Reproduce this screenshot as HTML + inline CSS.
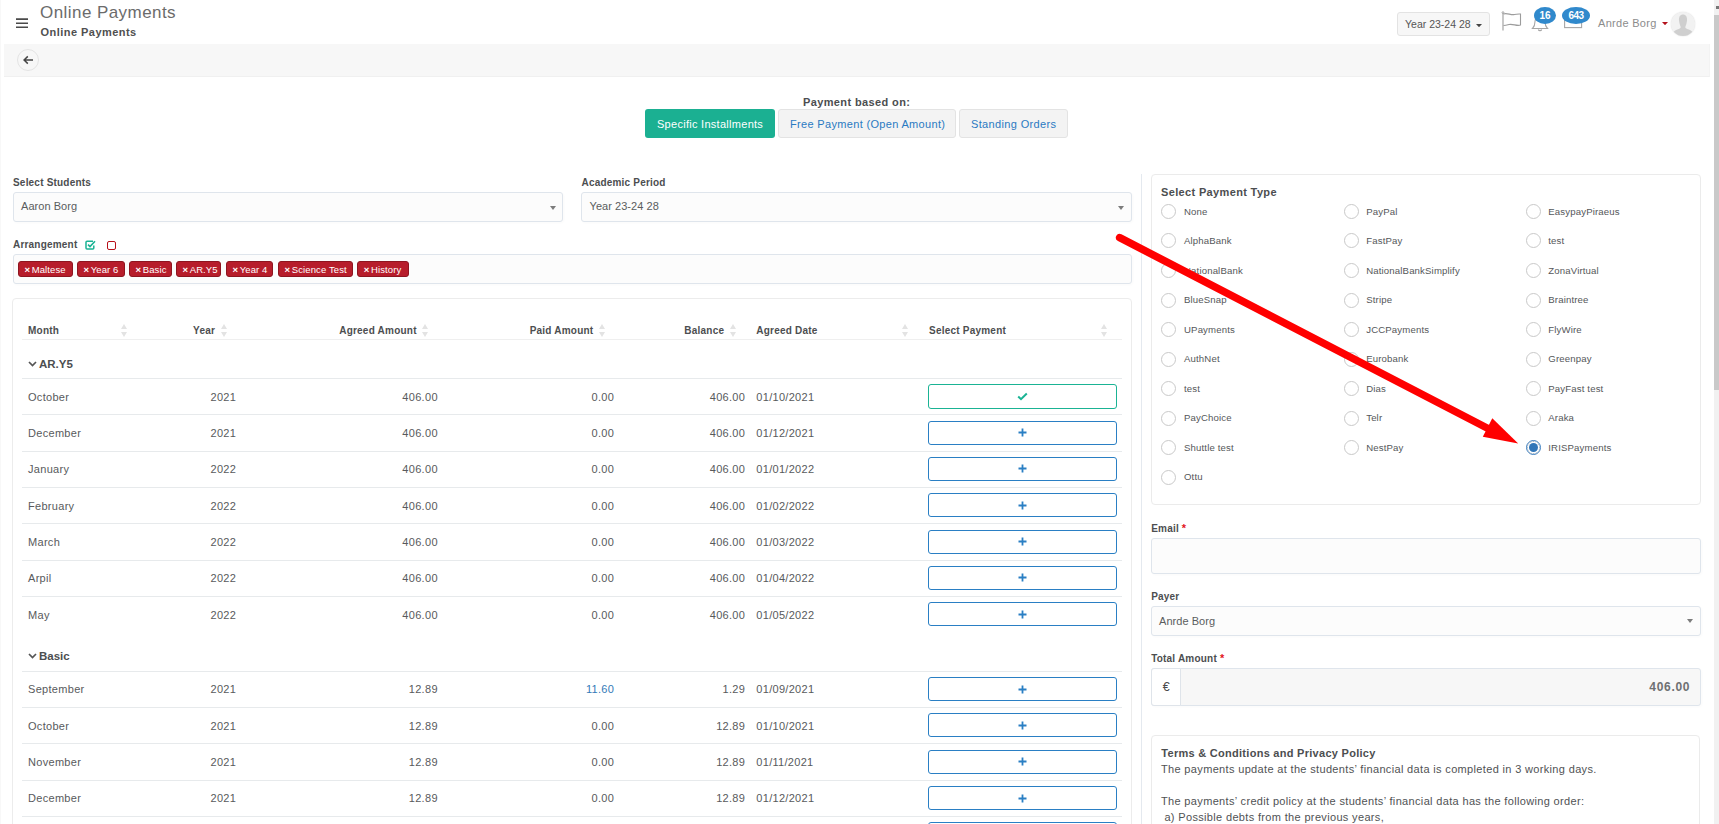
<!DOCTYPE html>
<html><head><meta charset="utf-8">
<style>
*{box-sizing:border-box;margin:0;padding:0}
html,body{width:1719px;height:824px;overflow:hidden;background:#fff}
body{position:relative;font-family:"Liberation Sans",sans-serif;color:#676a6c;font-size:11px}
.a{position:absolute;white-space:nowrap}
.b{font-weight:bold}
.lbl{position:absolute;white-space:nowrap;font-weight:bold;font-size:10px;color:#4c4e50;letter-spacing:0.2px;line-height:12px}
.inp{position:absolute;border:1px solid #dfe5ec;border-radius:3px;background:#fcfcfc;box-shadow:1px 1px 3px rgba(0,0,0,0.025)}
.caret{position:absolute;width:0;height:0;border-left:2.8px solid transparent;border-right:2.8px solid transparent;border-top:4px solid #7c7c7c}
.tag{position:absolute;top:261px;height:16px;background:#b71d2b;border:1px solid #8e1520;border-radius:3px;color:#fff;font-size:9.5px;line-height:15px;letter-spacing:0.12px;padding-left:5.5px}
.tag i{font-style:normal;font-weight:bold;font-size:9.5px;margin-right:1.5px;position:relative;top:0.3px}
.th{position:absolute;top:325px;font-weight:bold;font-size:10px;color:#4c4e50;letter-spacing:0.22px;line-height:12px;white-space:nowrap}
.srt{position:absolute;top:324px;width:6px;height:12px}
.srt:before{content:"";position:absolute;left:0;top:-0.5px;border-left:3.2px solid transparent;border-right:3.2px solid transparent;border-bottom:5.3px solid #e3e3e3}
.srt:after{content:"";position:absolute;left:0;top:7.8px;border-left:3.2px solid transparent;border-right:3.2px solid transparent;border-top:5.2px solid #e3e3e3}
.hl{position:absolute;left:22px;width:1100px;height:1px;background:#e7eaec}
.td{position:absolute;font-size:11px;letter-spacing:0.3px;color:#585a5c;line-height:14px;white-space:nowrap}
.r{text-align:right}
.btn{position:absolute;left:928px;width:189px;height:24px;border:1px solid #2a7fc4;border-radius:3px;background:#fff}
.rad{position:absolute;width:15px;height:15px;border:1px solid #c9c9c9;border-radius:50%;background:#fff}
.rl{position:absolute;font-size:9.6px;letter-spacing:0.15px;color:#55575a;line-height:12px;white-space:nowrap}
</style></head><body>
<div class="a" style="left:0;top:0;width:1px;height:824px;background:#f8f8f8"></div>
<svg class="a" style="left:0;top:0" width="40" height="40" viewBox="0 0 40 40"><path d="M16 19.1 H28 M16 23.2 H28 M16 27.3 H28" stroke="#4a4a4a" stroke-width="1.6" fill="none"/></svg>
<div class="a" style="left:40px;top:2.61px;font-size:17px;color:#6b6b6b;letter-spacing:0.44px;line-height:20px">Online Payments</div>
<div class="a b" style="left:40.5px;top:25.99px;font-size:11px;color:#505050;letter-spacing:0.46px;line-height:13px">Online Payments</div>
<div class="a" style="left:4px;top:44px;width:1706px;height:33px;background:#f7f7f7;border-bottom:1px solid #f0f0f0;border-right:1px solid #f3f3f3"></div>
<div class="a" style="left:17px;top:48.5px;width:22px;height:22px;border-radius:50%;border:1px solid #e4e4e4"></div>
<svg class="a" style="left:22px;top:54px" width="12" height="12" viewBox="0 0 12 12"><path d="M11 6 H2.3 M5.8 2.4 L2.1 6 L5.8 9.6" stroke="#454545" stroke-width="1.5" fill="none"/></svg>
<div class="a" style="left:1397px;top:12px;width:93px;height:24px;border:1px solid #e3e3e3;border-radius:3px;background:#f7f7f7"></div>
<div class="a" style="left:1405px;top:17.16px;font-size:10.5px;color:#555;line-height:14px">Year 23-24 28</div>
<svg class="a" style="left:1476px;top:23.8px" width="6" height="3.2" viewBox="0 0 6 3.2"><polygon points="0,0 6,0 3.0,3.2" fill="#444"/></svg>
<svg class="a" style="left:1500px;top:10px" width="24" height="24" viewBox="0 0 24 24">
 <path d="M3 2.5 V20.5" stroke="#9c9c9c" stroke-width="1.1" fill="none"/>
 <circle cx="3" cy="2.6" r="0.9" fill="#fff" stroke="#9c9c9c" stroke-width="0.9"/>
 <path d="M3.5 4 C7 2.5, 11 5.5, 14.5 4.5 C17 3.8, 19.5 4, 20.5 4 V15 C17 16.5, 13 13.5, 9 14.5 C6.5 15.2, 4.5 15.5, 3.5 15.5" stroke="#9c9c9c" stroke-width="1.1" fill="none"/>
</svg>
<svg class="a" style="left:1530px;top:13px" width="20" height="20" viewBox="0 0 20 20">
 <path d="M2.5 15.5 C4.5 13.5, 5 11, 5 8.5 C5 5.5, 7.5 3, 10 3 C12.5 3, 15 5.5, 15 8.5 C15 11, 15.5 13.5, 17.5 15.5 Z" stroke="#a6a6a6" stroke-width="1.1" fill="none"/>
 <path d="M8.3 16.5 C8.8 18, 11.2 18, 11.7 16.5" stroke="#a6a6a6" stroke-width="1.1" fill="none"/>
</svg>
<div class="a" style="left:1534px;top:7px;width:22px;height:17px;border-radius:50%;background:#3089cc;color:#fff;font-weight:bold;font-size:10px;line-height:17px;text-align:center">16</div>
<svg class="a" style="left:1562px;top:14px" width="22" height="16" viewBox="0 0 22 16">
 <rect x="2.6" y="2.6" width="17" height="11" stroke="#a6a6a6" stroke-width="1.1" fill="none"/>
</svg>
<div class="a" style="left:1562px;top:7px;width:28px;height:17px;border-radius:50%;background:#3089cc;color:#fff;font-weight:bold;font-size:10px;line-height:17px;text-align:center;letter-spacing:-0.6px">643</div>
<div class="a" style="left:1598px;top:15.69px;font-size:11px;color:#8c8c8c;letter-spacing:0.3px;line-height:14px">Anrde Borg</div>
<svg class="a" style="left:1662px;top:21.8px" width="6" height="3.2" viewBox="0 0 6 3.2"><polygon points="0,0 6,0 3.0,3.2" fill="#b4121c"/></svg>
<div class="a" style="left:1671px;top:11.5px;width:24px;height:24px;border-radius:50%;background:#f2f2f2;overflow:hidden;box-shadow:0 0 1.5px #d8d8d8">
 <svg width="24" height="24" viewBox="0 0 24 24"><path d="M12 2.6 C14.8 2.6, 16.3 4.8, 16 8.5 C15.8 11, 15 13.2, 14.3 15 C14.2 16, 15 16.6, 17.8 17.6 C20 18.4, 21.5 19.6, 22 22 L22 24 L2 24 L2 22 C2.5 19.6, 4 18.4, 6.2 17.6 C9 16.6, 9.8 16, 9.7 15 C9 13.2, 8.2 11, 8 8.5 C7.7 4.8, 9.2 2.6, 12 2.6 Z" fill="#cfcfcf"/></svg>
</div>
<div class="a b" style="left:803px;top:96.49px;font-size:11px;color:#4c4e50;letter-spacing:0.38px;line-height:13px">Payment based on:</div>
<div class="a" style="left:645px;top:109px;width:130px;height:29px;background:#1bb092;border-radius:3px"></div>
<div class="a" style="left:657px;top:116.99px;font-size:11px;color:#fff;letter-spacing:0.28px;line-height:14px">Specific Installments</div>
<div class="a" style="left:778px;top:109px;width:178px;height:29px;background:#f3f3f3;border:1px solid #e3e3e3;border-radius:3px"></div>
<div class="a" style="left:790px;top:116.99px;font-size:11px;color:#2a7ac2;letter-spacing:0.33px;line-height:14px">Free Payment (Open Amount)</div>
<div class="a" style="left:959px;top:109px;width:109px;height:29px;background:#f3f3f3;border:1px solid #e3e3e3;border-radius:3px"></div>
<div class="a" style="left:971px;top:116.99px;font-size:11px;color:#2a7ac2;letter-spacing:0.35px;line-height:14px">Standing Orders</div>
<div class="lbl" style="left:13px;top:177.03px">Select Students</div>
<div class="inp" style="left:12.5px;top:192px;width:550px;height:29.5px"></div>
<div class="td" style="left:21px;top:198.69px;letter-spacing:0.05px;color:#5a5c5e">Aaron Borg</div>
<svg class="a" style="left:550px;top:205.6px" width="6" height="4" viewBox="0 0 6 4"><polygon points="0,0 6,0 3.0,4" fill="#7c7c7c"/></svg>
<div class="lbl" style="left:581.5px;top:177.03px">Academic Period</div>
<div class="inp" style="left:581px;top:192px;width:550.5px;height:29.5px"></div>
<div class="td" style="left:589.5px;top:198.69px;letter-spacing:0.05px;color:#5a5c5e">Year 23-24 28</div>
<svg class="a" style="left:1118.2px;top:205.6px" width="6" height="4" viewBox="0 0 6 4"><polygon points="0,0 6,0 3.0,4" fill="#7c7c7c"/></svg>
<div class="lbl" style="left:13px;top:239.34px">Arrangement</div>
<svg class="a" style="left:85px;top:239.8px" width="11" height="10" viewBox="0 0 11 10">
<path d="M8 1.2 H2 Q1 1.2 1 2.2 V8 Q1 9 2 9 H7.8 Q8.8 9 8.8 8 V5.5" stroke="#1ab394" stroke-width="1.5" fill="none"/>
<path d="M3 4.6 L5 6.6 L10 1.3" stroke="#1ab394" stroke-width="1.6" fill="none"/></svg>
<div class="a" style="left:107px;top:241px;width:9px;height:9px;border:1.7px solid #b8101a;border-radius:2px"></div>
<div class="inp" style="left:12.5px;top:254px;width:1119px;height:29.5px"></div>
<div class="tag" style="left:18px;width:55.0px"><i>&#215;</i>Maltese</div>
<div class="tag" style="left:77px;width:48.0px"><i>&#215;</i>Year 6</div>
<div class="tag" style="left:129px;width:43.0px"><i>&#215;</i>Basic</div>
<div class="tag" style="left:176px;width:45.0px"><i>&#215;</i>AR.Y5</div>
<div class="tag" style="left:226px;width:47.0px"><i>&#215;</i>Year 4</div>
<div class="tag" style="left:278px;width:74.6px"><i>&#215;</i>Science Test</div>
<div class="tag" style="left:357.3px;width:51.7px"><i>&#215;</i>History</div>
<div class="a" style="left:12px;top:298px;width:1119.5px;height:600px;border:1px solid #ececec;border-radius:4px;background:#fff"></div>
<div class="th" style="left:28px">Month</div>
<div class="th r" style="right:1503.9px">Year</div>
<div class="th r" style="right:1302.3px">Agreed Amount</div>
<div class="th r" style="right:1125.6px">Paid Amount</div>
<div class="th r" style="right:994.8px">Balance</div>
<div class="th" style="left:756.3px">Agreed Date</div>
<div class="th" style="left:929px">Select Payment</div>
<div class="srt" style="left:120.8px"></div>
<div class="srt" style="left:220.6px"></div>
<div class="srt" style="left:421.8px"></div>
<div class="srt" style="left:598.9px"></div>
<div class="srt" style="left:729.8px"></div>
<div class="srt" style="left:901.8px"></div>
<div class="srt" style="left:1100.8px"></div>
<div class="hl" style="top:339px;background:#efefef"></div>
<svg class="a" style="left:27.5px;top:361.1px" width="9" height="6" viewBox="0 0 9 6"><path d="M1 1 L4.5 4.5 L8 1" stroke="#555" stroke-width="1.7" fill="none"/></svg>
<div class="td b" style="left:39px;top:357.42px;font-size:11.5px;letter-spacing:0;color:#4c4e50">AR.Y5</div>
<div class="hl" style="top:378px"></div>
<div class="td" style="left:28px;top:389.59px">October</div>
<div class="td r" style="right:1482.8px;top:389.59px">2021</div>
<div class="td r" style="right:1281.2px;top:389.59px">406.00</div>
<div class="td r" style="right:1104.8px;top:389.59px">0.00</div>
<div class="td r" style="right:973.8px;top:389.59px">406.00</div>
<div class="td" style="left:756.3px;top:389.59px">01/10/2021</div>
<div class="btn" style="top:384px;height:25px;border-color:#1ab394;"><svg class="a" style="left:88px;top:7px" width="11" height="9" viewBox="0 0 11 9"><path d="M1.2 4.5 L4 7.2 L9.8 1.5" stroke="#1ab394" stroke-width="2" fill="none"/></svg></div>
<div class="hl" style="top:414px"></div>
<div class="td" style="left:28px;top:425.92px">December</div>
<div class="td r" style="right:1482.8px;top:425.92px">2021</div>
<div class="td r" style="right:1281.2px;top:425.92px">406.00</div>
<div class="td r" style="right:1104.8px;top:425.92px">0.00</div>
<div class="td r" style="right:973.8px;top:425.92px">406.00</div>
<div class="td" style="left:756.3px;top:425.92px">01/12/2021</div>
<div class="btn" style="top:420.63px"><svg class="a" style="left:89px;top:6.5px" width="9" height="9" viewBox="0 0 9 9"><path d="M4.5 0.5 V8.5 M0.5 4.5 H8.5" stroke="#2a7fc4" stroke-width="1.8" fill="none"/></svg></div>
<div class="hl" style="top:451px"></div>
<div class="td" style="left:28px;top:462.25px">January</div>
<div class="td r" style="right:1482.8px;top:462.25px">2022</div>
<div class="td r" style="right:1281.2px;top:462.25px">406.00</div>
<div class="td r" style="right:1104.8px;top:462.25px">0.00</div>
<div class="td r" style="right:973.8px;top:462.25px">406.00</div>
<div class="td" style="left:756.3px;top:462.25px">01/01/2022</div>
<div class="btn" style="top:456.96px"><svg class="a" style="left:89px;top:6.5px" width="9" height="9" viewBox="0 0 9 9"><path d="M4.5 0.5 V8.5 M0.5 4.5 H8.5" stroke="#2a7fc4" stroke-width="1.8" fill="none"/></svg></div>
<div class="hl" style="top:487px"></div>
<div class="td" style="left:28px;top:498.58px">February</div>
<div class="td r" style="right:1482.8px;top:498.58px">2022</div>
<div class="td r" style="right:1281.2px;top:498.58px">406.00</div>
<div class="td r" style="right:1104.8px;top:498.58px">0.00</div>
<div class="td r" style="right:973.8px;top:498.58px">406.00</div>
<div class="td" style="left:756.3px;top:498.58px">01/02/2022</div>
<div class="btn" style="top:493.29px"><svg class="a" style="left:89px;top:6.5px" width="9" height="9" viewBox="0 0 9 9"><path d="M4.5 0.5 V8.5 M0.5 4.5 H8.5" stroke="#2a7fc4" stroke-width="1.8" fill="none"/></svg></div>
<div class="hl" style="top:523px"></div>
<div class="td" style="left:28px;top:534.91px">March</div>
<div class="td r" style="right:1482.8px;top:534.91px">2022</div>
<div class="td r" style="right:1281.2px;top:534.91px">406.00</div>
<div class="td r" style="right:1104.8px;top:534.91px">0.00</div>
<div class="td r" style="right:973.8px;top:534.91px">406.00</div>
<div class="td" style="left:756.3px;top:534.91px">01/03/2022</div>
<div class="btn" style="top:529.62px"><svg class="a" style="left:89px;top:6.5px" width="9" height="9" viewBox="0 0 9 9"><path d="M4.5 0.5 V8.5 M0.5 4.5 H8.5" stroke="#2a7fc4" stroke-width="1.8" fill="none"/></svg></div>
<div class="hl" style="top:560px"></div>
<div class="td" style="left:28px;top:571.24px">Arpil</div>
<div class="td r" style="right:1482.8px;top:571.24px">2022</div>
<div class="td r" style="right:1281.2px;top:571.24px">406.00</div>
<div class="td r" style="right:1104.8px;top:571.24px">0.00</div>
<div class="td r" style="right:973.8px;top:571.24px">406.00</div>
<div class="td" style="left:756.3px;top:571.24px">01/04/2022</div>
<div class="btn" style="top:565.95px"><svg class="a" style="left:89px;top:6.5px" width="9" height="9" viewBox="0 0 9 9"><path d="M4.5 0.5 V8.5 M0.5 4.5 H8.5" stroke="#2a7fc4" stroke-width="1.8" fill="none"/></svg></div>
<div class="hl" style="top:596px"></div>
<div class="td" style="left:28px;top:607.57px">May</div>
<div class="td r" style="right:1482.8px;top:607.57px">2022</div>
<div class="td r" style="right:1281.2px;top:607.57px">406.00</div>
<div class="td r" style="right:1104.8px;top:607.57px">0.00</div>
<div class="td r" style="right:973.8px;top:607.57px">406.00</div>
<div class="td" style="left:756.3px;top:607.57px">01/05/2022</div>
<div class="btn" style="top:602.28px"><svg class="a" style="left:89px;top:6.5px" width="9" height="9" viewBox="0 0 9 9"><path d="M4.5 0.5 V8.5 M0.5 4.5 H8.5" stroke="#2a7fc4" stroke-width="1.8" fill="none"/></svg></div>
<svg class="a" style="left:27.5px;top:653.1px" width="9" height="6" viewBox="0 0 9 6"><path d="M1 1 L4.5 4.5 L8 1" stroke="#555" stroke-width="1.7" fill="none"/></svg>
<div class="td b" style="left:39px;top:649.42px;font-size:11.5px;letter-spacing:0;color:#4c4e50">Basic</div>
<div class="hl" style="top:671px"></div>
<div class="td" style="left:28px;top:682.39px">September</div>
<div class="td r" style="right:1482.8px;top:682.39px">2021</div>
<div class="td r" style="right:1281.2px;top:682.39px">12.89</div>
<div class="td r" style="right:1104.8px;top:682.39px;color:#337ab7">11.60</div>
<div class="td r" style="right:973.8px;top:682.39px">1.29</div>
<div class="td" style="left:756.3px;top:682.39px">01/09/2021</div>
<div class="btn" style="top:677.10px"><svg class="a" style="left:89px;top:6.5px" width="9" height="9" viewBox="0 0 9 9"><path d="M4.5 0.5 V8.5 M0.5 4.5 H8.5" stroke="#2a7fc4" stroke-width="1.8" fill="none"/></svg></div>
<div class="hl" style="top:707px"></div>
<div class="td" style="left:28px;top:718.72px">October</div>
<div class="td r" style="right:1482.8px;top:718.72px">2021</div>
<div class="td r" style="right:1281.2px;top:718.72px">12.89</div>
<div class="td r" style="right:1104.8px;top:718.72px">0.00</div>
<div class="td r" style="right:973.8px;top:718.72px">12.89</div>
<div class="td" style="left:756.3px;top:718.72px">01/10/2021</div>
<div class="btn" style="top:713.43px"><svg class="a" style="left:89px;top:6.5px" width="9" height="9" viewBox="0 0 9 9"><path d="M4.5 0.5 V8.5 M0.5 4.5 H8.5" stroke="#2a7fc4" stroke-width="1.8" fill="none"/></svg></div>
<div class="hl" style="top:743px"></div>
<div class="td" style="left:28px;top:755.05px">November</div>
<div class="td r" style="right:1482.8px;top:755.05px">2021</div>
<div class="td r" style="right:1281.2px;top:755.05px">12.89</div>
<div class="td r" style="right:1104.8px;top:755.05px">0.00</div>
<div class="td r" style="right:973.8px;top:755.05px">12.89</div>
<div class="td" style="left:756.3px;top:755.05px">01/11/2021</div>
<div class="btn" style="top:749.76px"><svg class="a" style="left:89px;top:6.5px" width="9" height="9" viewBox="0 0 9 9"><path d="M4.5 0.5 V8.5 M0.5 4.5 H8.5" stroke="#2a7fc4" stroke-width="1.8" fill="none"/></svg></div>
<div class="hl" style="top:780px"></div>
<div class="td" style="left:28px;top:791.38px">December</div>
<div class="td r" style="right:1482.8px;top:791.38px">2021</div>
<div class="td r" style="right:1281.2px;top:791.38px">12.89</div>
<div class="td r" style="right:1104.8px;top:791.38px">0.00</div>
<div class="td r" style="right:973.8px;top:791.38px">12.89</div>
<div class="td" style="left:756.3px;top:791.38px">01/12/2021</div>
<div class="btn" style="top:786.09px"><svg class="a" style="left:89px;top:6.5px" width="9" height="9" viewBox="0 0 9 9"><path d="M4.5 0.5 V8.5 M0.5 4.5 H8.5" stroke="#2a7fc4" stroke-width="1.8" fill="none"/></svg></div>
<div class="hl" style="top:816px"></div>
<div class="td" style="left:28px;top:827.71px">January</div>
<div class="td r" style="right:1482.8px;top:827.71px">2022</div>
<div class="td r" style="right:1281.2px;top:827.71px">12.89</div>
<div class="td r" style="right:1104.8px;top:827.71px">0.00</div>
<div class="td r" style="right:973.8px;top:827.71px">12.89</div>
<div class="td" style="left:756.3px;top:827.71px">01/01/2022</div>
<div class="btn" style="top:822.42px"><svg class="a" style="left:89px;top:6.5px" width="9" height="9" viewBox="0 0 9 9"><path d="M4.5 0.5 V8.5 M0.5 4.5 H8.5" stroke="#2a7fc4" stroke-width="1.8" fill="none"/></svg></div>
<div class="a" style="left:1141px;top:174px;width:1px;height:650px;background:#e4e9ef"></div>
<div class="a" style="left:1151px;top:174px;width:549.5px;height:330.5px;border:1px solid #ebebeb;border-radius:4px;background:#fff"></div>
<div class="a b" style="left:1161px;top:186.29px;font-size:11px;color:#4c4e50;letter-spacing:0.35px;line-height:13px">Select Payment Type</div>
<div class="rad" style="left:1161.0px;top:203.9px"></div>
<div class="rl" style="left:1184px;top:205.77px">None</div>
<div class="rad" style="left:1161.0px;top:233.4px"></div>
<div class="rl" style="left:1184px;top:235.29px">AlphaBank</div>
<div class="rad" style="left:1161.0px;top:262.9px"></div>
<div class="rl" style="left:1184px;top:264.81px">NationalBank</div>
<div class="rad" style="left:1161.0px;top:292.5px"></div>
<div class="rl" style="left:1184px;top:294.33px">BlueSnap</div>
<div class="rad" style="left:1161.0px;top:322.0px"></div>
<div class="rl" style="left:1184px;top:323.85px">UPayments</div>
<div class="rad" style="left:1161.0px;top:351.5px"></div>
<div class="rl" style="left:1184px;top:353.37px">AuthNet</div>
<div class="rad" style="left:1161.0px;top:381.0px"></div>
<div class="rl" style="left:1184px;top:382.89px">test</div>
<div class="rad" style="left:1161.0px;top:410.5px"></div>
<div class="rl" style="left:1184px;top:412.41px">PayChoice</div>
<div class="rad" style="left:1161.0px;top:440.1px"></div>
<div class="rl" style="left:1184px;top:441.93px">Shuttle test</div>
<div class="rad" style="left:1161.0px;top:469.6px"></div>
<div class="rl" style="left:1184px;top:471.45px">Ottu</div>
<div class="rad" style="left:1343.7px;top:203.9px"></div>
<div class="rl" style="left:1366.2px;top:205.77px">PayPal</div>
<div class="rad" style="left:1343.7px;top:233.4px"></div>
<div class="rl" style="left:1366.2px;top:235.29px">FastPay</div>
<div class="rad" style="left:1343.7px;top:262.9px"></div>
<div class="rl" style="left:1366.2px;top:264.81px">NationalBankSimplify</div>
<div class="rad" style="left:1343.7px;top:292.5px"></div>
<div class="rl" style="left:1366.2px;top:294.33px">Stripe</div>
<div class="rad" style="left:1343.7px;top:322.0px"></div>
<div class="rl" style="left:1366.2px;top:323.85px">JCCPayments</div>
<div class="rad" style="left:1343.7px;top:351.5px"></div>
<div class="rl" style="left:1366.2px;top:353.37px">Eurobank</div>
<div class="rad" style="left:1343.7px;top:381.0px"></div>
<div class="rl" style="left:1366.2px;top:382.89px">Dias</div>
<div class="rad" style="left:1343.7px;top:410.5px"></div>
<div class="rl" style="left:1366.2px;top:412.41px">Telr</div>
<div class="rad" style="left:1343.7px;top:440.1px"></div>
<div class="rl" style="left:1366.2px;top:441.93px">NestPay</div>
<div class="rad" style="left:1526.1px;top:203.9px"></div>
<div class="rl" style="left:1548.3px;top:205.77px">EasypayPiraeus</div>
<div class="rad" style="left:1526.1px;top:233.4px"></div>
<div class="rl" style="left:1548.3px;top:235.29px">test</div>
<div class="rad" style="left:1526.1px;top:262.9px"></div>
<div class="rl" style="left:1548.3px;top:264.81px">ZonaVirtual</div>
<div class="rad" style="left:1526.1px;top:292.5px"></div>
<div class="rl" style="left:1548.3px;top:294.33px">Braintree</div>
<div class="rad" style="left:1526.1px;top:322.0px"></div>
<div class="rl" style="left:1548.3px;top:323.85px">FlyWire</div>
<div class="rad" style="left:1526.1px;top:351.5px"></div>
<div class="rl" style="left:1548.3px;top:353.37px">Greenpay</div>
<div class="rad" style="left:1526.1px;top:381.0px"></div>
<div class="rl" style="left:1548.3px;top:382.89px">PayFast test</div>
<div class="rad" style="left:1526.1px;top:410.5px"></div>
<div class="rl" style="left:1548.3px;top:412.41px">Araka</div>
<div class="rad" style="left:1526.1px;top:440.1px;border-color:#3a7ec0"></div>
<div class="a" style="left:1527.3px;top:441.3px;width:12.6px;height:12.6px;border-radius:50%;border:1px dotted #9ab"></div>
<div class="a" style="left:1528.9px;top:442.9px;width:9.4px;height:9.4px;border-radius:50%;background:#3176b8"></div>
<div class="rl" style="left:1548.3px;top:441.93px">IRISPayments</div>
<div class="lbl" style="left:1151.2px;top:521.63px">Email <span style="color:#e2141c;font-size:11px">*</span></div>
<div class="inp" style="left:1151px;top:537.5px;width:549.5px;height:36.5px"></div>
<div class="lbl" style="left:1151.2px;top:590.53px">Payer</div>
<div class="inp" style="left:1151px;top:605.8px;width:549.5px;height:30px"></div>
<div class="td" style="left:1159px;top:613.59px;letter-spacing:0.05px;color:#5a5c5e">Anrde Borg</div>
<svg class="a" style="left:1686.8px;top:619.4px" width="6" height="4" viewBox="0 0 6 4"><polygon points="0,0 6,0 3.0,4" fill="#7c7c7c"/></svg>
<div class="lbl" style="left:1151.2px;top:652.33px">Total Amount <span style="color:#e2141c;font-size:11px">*</span></div>
<div class="inp" style="left:1151px;top:668px;width:549.5px;height:37.5px;background:#f7f7f7"></div>
<div class="a" style="left:1151px;top:668px;width:30px;height:37.5px;border:1px solid #dfe4ea;border-radius:3px 0 0 3px;background:#fff"></div>
<div class="td" style="left:1162.8px;top:679.67px;color:#4a4a4a;font-size:12.5px;letter-spacing:0">&#8364;</div>
<div class="td b r" style="right:28.799999999999955px;top:679.94px;font-size:12px;color:#6e7072;letter-spacing:0.7px;padding-right:0">406.00</div>
<div class="a" style="left:1151px;top:735px;width:549px;height:200px;border:1px solid #ebebeb;border-radius:4px;background:#fff"></div>
<div class="a b" style="left:1161.3px;top:744.79px;font-size:11px;color:#4c4e50;letter-spacing:0.28px;line-height:16px">Terms &amp; Conditions and Privacy Policy</div>
<div class="a" style="left:1161px;top:761.39px;font-size:11px;color:#505254;letter-spacing:0.34px;line-height:16px;white-space:pre">The payments update at the students’ financial data is completed in 3 working days.

The payments’ credit policy at the students’ financial data has the following order:
 a) Possible debts from the previous years,</div>
<svg class="a" style="left:0;top:0" width="1719" height="824" viewBox="0 0 1719 824">
<line x1="1119.7" y1="237.6" x2="1488" y2="428.5" stroke="#ff0000" stroke-width="7.6" stroke-linecap="round"/>
<polygon points="1518.2,443.5 1492.3,418.3 1482.8,436.7" fill="#ff0000"/>
</svg>
<div class="a" style="left:1714px;top:0;width:5px;height:824px;background:#f1f1f1"></div>
<div class="a" style="left:1714px;top:15px;width:5px;height:375px;background:#c9c9c9"></div>
<div class="a" style="left:1716px;top:6px;width:3px;height:3px;background:#777"></div>
</body></html>
